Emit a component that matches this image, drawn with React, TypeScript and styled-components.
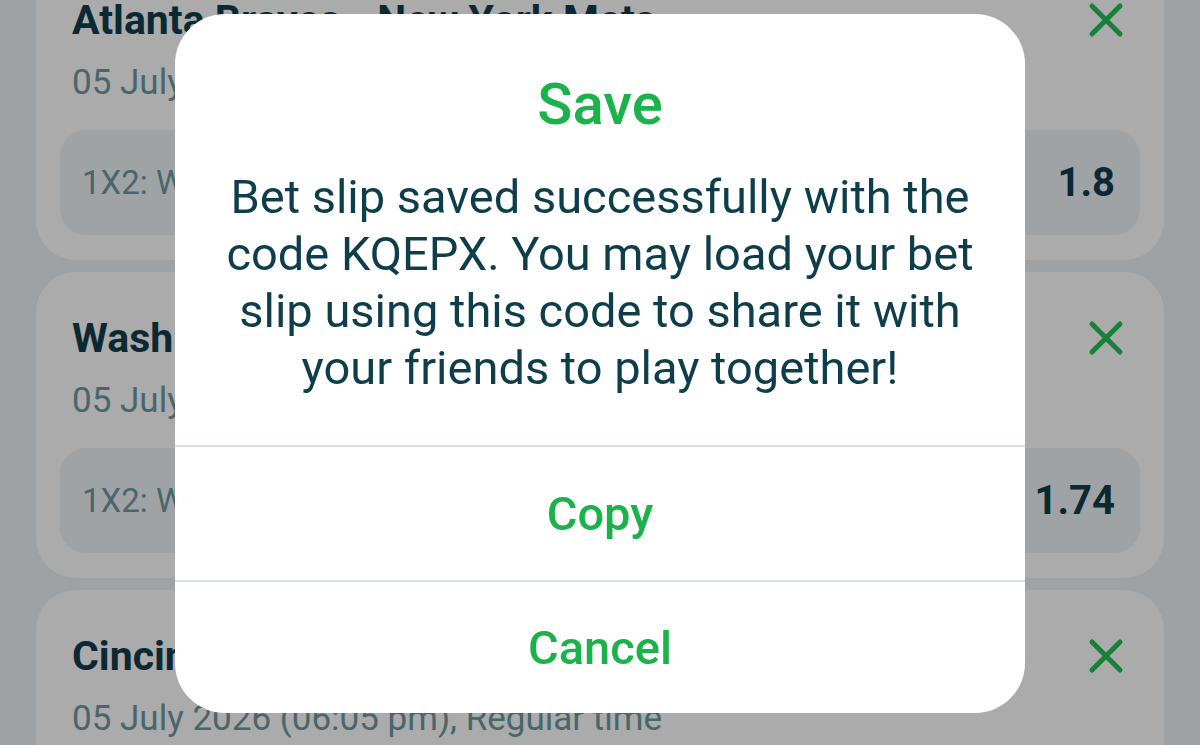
import React from 'react';
import styled, { createGlobalStyle } from 'styled-components';

const GlobalStyle = createGlobalStyle`
  html, body {
    margin: 0;
    padding: 0;
    background: #ecf2f6;
    font-family: Roboto, "Noto Sans", "Liberation Sans", sans-serif;
    overflow: hidden;
  }
`

const Page = styled.div`
  width: 1200px;
  height: 745px;
  overflow: hidden;
  background: #ecf2f6;
`

// the slip list is scrolled a little, so the first card starts above the top
const SlipList = styled.div`
  display: flex;
  flex-direction: column;
  gap: 12px;
  padding: 0 36px;
  margin-top: -46px;
`

const Card = styled.div`
  background: #ffffff;
  border-radius: 40px;
  padding: 42px 24px 25px;
`

const CardHead = styled.div`
  display: flex;
  align-items: center;
  gap: 24px;
  padding: 0 16px 0 12px;
`

const Match = styled.div`
  flex: 1;
  min-width: 0;
  font-size: 41px;
  line-height: 48px;
  font-weight: 700;
  color: #0f3e4c;
  white-space: nowrap;
  overflow: hidden;
  text-overflow: ellipsis;
`

const RemoveButton = styled.button`
  border: 0;
  background: none;
  padding: 0;
  width: 36px;
  height: 36px;
  display: flex;
  cursor: pointer;
`

const MatchDate = styled.div`
  margin-top: 17px;
  padding-left: 12px;
  font-size: 35px;
  line-height: 44px;
  color: #6e99a0;
  white-space: nowrap;
  overflow: hidden;
`

const OddsBox = styled.div`
  margin-top: 25px;
  height: 105px;
  border-radius: 26px;
  background: #eef3f6;
  display: flex;
  align-items: center;
  justify-content: space-between;
  padding: 0 25px 0 22px;
`

const Market = styled.span`
  font-size: 33px;
  color: #6e99a0;
`

const Odd = styled.span`
  font-size: 40px;
  font-weight: 700;
  color: #0f3e4c;
`

const Scrim = styled.div`
  position: fixed;
  inset: 0;
  background: rgba(0, 0, 0, 0.33);
  display: flex;
  align-items: center;
  justify-content: center;
  padding-bottom: 18px;
`

const Dialog = styled.div`
  width: 850px;
  background: #ffffff;
  border-radius: 50px;
  overflow: hidden;
  display: flex;
  flex-direction: column;
`

const DialogTitle = styled.h2`
  margin: 0;
  padding-top: 58px;
  text-align: center;
  font-size: 58px;
  line-height: 64px;
  font-weight: 500;
  color: #1bb24b;
`

const DialogText = styled.p`
  margin: 32px 0 0;
  padding: 0 30px 49px;
  text-align: center;
  white-space: pre-line;
  font-size: 47px;
  line-height: 57px;
  color: #0e3d4c;
`

const DialogAction = styled.button<{ $last?: boolean }>`
  border: 0;
  border-top: 2px solid #d7e1e4;
  background: none;
  height: ${p => (p.$last ? 133 : 135)}px;
  font-family: inherit;
  font-size: 47px;
  font-weight: 500;
  color: #1bb24b;
  cursor: pointer;
`

const CloseIcon = () => (
  <svg width="36" height="36" viewBox="0 0 36 36">
    <path d="M4 4 L32 32 M32 4 L4 32" stroke="#24c156" strokeWidth="5" strokeLinecap="round" fill="none" />
  </svg>
)

const slips = [
  { match: 'Atlanta Braves - New York Mets', date: '05 July 2026 (01:20 pm), Regular time', market: '1X2: Winner: Atlanta Braves', odd: '1.8' },
  { match: 'Washington Nationals - Miami Marlins', date: '05 July 2026 (01:35 pm), Regular time', market: '1X2: Winner: Washington Nationals', odd: '1.74' },
  { match: 'Cincinnati Reds - Chicago Cubs', date: '05 July 2026 (06:05 pm), Regular time', market: '1X2: Winner: Cincinnati Reds', odd: '1.66' },
]

const message = `Bet slip saved successfully with the
code KQEPX. You may load your bet
slip using this code to share it with
your friends to play together!`

function App() {
  return (
    <Page>
      <GlobalStyle />
      <SlipList>
        {slips.map(s => (
          <Card key={s.match}>
            <CardHead>
              <Match>{s.match}</Match>
              <RemoveButton aria-label="Remove">
                <CloseIcon />
              </RemoveButton>
            </CardHead>
            <MatchDate>{s.date}</MatchDate>
            <OddsBox>
              <Market>{s.market}</Market>
              <Odd>{s.odd}</Odd>
            </OddsBox>
          </Card>
        ))}
      </SlipList>
      <Scrim>
        <Dialog>
          <DialogTitle>Save</DialogTitle>
          <DialogText>{message}</DialogText>
          <DialogAction>Copy</DialogAction>
          <DialogAction $last>Cancel</DialogAction>
        </Dialog>
      </Scrim>
    </Page>
  );
}

export default App;
